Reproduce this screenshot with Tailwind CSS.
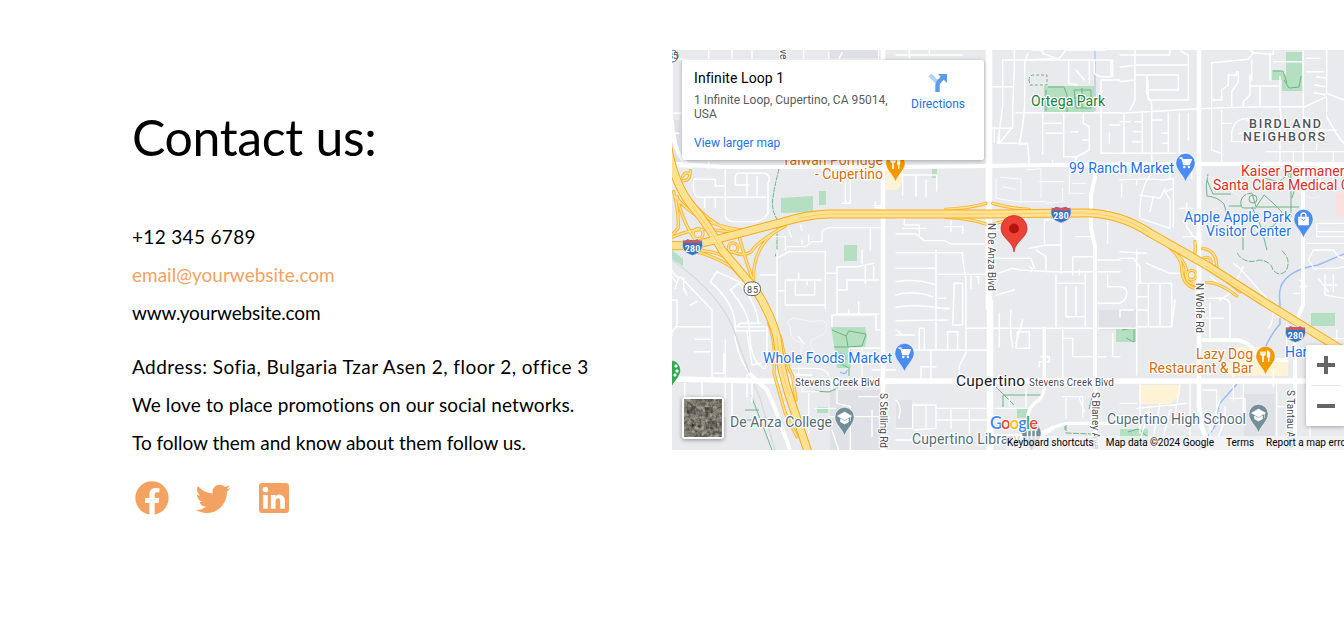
<!DOCTYPE html>
<html lang="en">
<head>
<meta charset="utf-8">
<title>Contact us</title>
<script src="https://cdn.jsdelivr.net/npm/@tailwindcss/browser@4"></script>
</head>
<body class="bg-white text-black font-['Lato',sans-serif] overflow-hidden">
<main class="flex h-[626px] w-[1344px] overflow-hidden">
  <section class="w-[672px] shrink-0 pl-[132px] pt-[102px]">
    <h1 class="text-[50px] leading-[70px] tracking-[-0.35px] whitespace-nowrap">Contact us:</h1>
    <div class="mt-[46px] text-[19px] leading-[38px] font-normal whitespace-nowrap">
      <p><span class="tracking-[0.33px]">+12 345 6789</span></p>
      <p><a class="text-[#f4a261] tracking-[0px]">email@yourwebsite.com</a></p>
      <p><span class="tracking-[-0.12px]">www.yourwebsite.com</span></p>
    </div>
    <div class="mt-4 text-[19px] leading-[38px] whitespace-nowrap">
      <p><span class="tracking-[0.46px]">Address: Sofia, Bulgaria Tzar Asen 2, floor 2, office 3</span></p>
      <p><span class="tracking-[0.12px]">We love to place promotions on our social networks.</span></p>
      <p><span class="tracking-[-0.02px]">To follow them and know about them follow us.</span></p>
    </div>
    <div class="mt-4 flex gap-[21px] text-[#f4a261]">
      <svg class="size-10" viewBox="0 0 24 24" fill="currentColor"><path d="M22 12.04C22 6.5 17.52 2 12 2S2 6.5 2 12.04c0 5.02 3.66 9.17 8.44 9.92v-7.01H7.9v-2.91h2.54V9.84c0-2.51 1.49-3.9 3.77-3.9 1.1 0 2.24.2 2.24.2v2.47h-1.26c-1.24 0-1.63.77-1.63 1.57v1.86h2.78l-.45 2.91h-2.33v7.01C18.34 21.21 22 17.06 22 12.04z"/></svg>
      <svg class="size-10" viewBox="0 0 24 24" fill="currentColor"><path d="M22.46 6c-.77.35-1.6.58-2.46.69.88-.53 1.56-1.37 1.88-2.38-.83.5-1.75.85-2.72 1.05C18.37 4.5 17.26 4 16 4c-2.35 0-4.27 1.92-4.27 4.29 0 .34.04.67.11.98C8.28 9.09 5.11 7.38 3 4.79c-.37.63-.58 1.37-.58 2.15 0 1.49.75 2.81 1.91 3.56-.71 0-1.37-.2-1.95-.5v.03c0 2.08 1.48 3.82 3.44 4.21a4.22 4.22 0 0 1-1.93.07 4.28 4.28 0 0 0 4 2.98 8.521 8.521 0 0 1-5.33 1.84c-.34 0-.68-.02-1.02-.06C3.44 20.29 5.7 21 8.12 21 16 21 20.33 14.46 20.33 8.79c0-.19 0-.37-.01-.56.84-.6 1.56-1.36 2.14-2.23z"/></svg>
      <svg class="size-10" viewBox="0 0 24 24" fill="currentColor"><path d="M19 3a2 2 0 0 1 2 2v14a2 2 0 0 1-2 2H5a2 2 0 0 1-2-2V5a2 2 0 0 1 2-2h14m-.5 15.5v-5.3a3.26 3.26 0 0 0-3.26-3.26c-.85 0-1.84.52-2.32 1.3v-1.11h-2.79v8.37h2.79v-4.93c0-.77.62-1.4 1.39-1.4a1.4 1.4 0 0 1 1.4 1.4v4.93h2.79M6.88 8.56a1.68 1.68 0 0 0 1.68-1.68c0-.93-.75-1.69-1.68-1.69a1.69 1.69 0 0 0-1.69 1.69c0 .93.76 1.68 1.69 1.68m1.39 9.94v-8.37H5.5v8.37h2.77z"/></svg>
    </div>
  </section>

  <section class="relative mt-[50px] h-[400px] w-[672px] shrink-0 overflow-hidden bg-[#e8eaed] font-['Roboto',sans-serif]">
    <svg class="block h-[400px] w-[672px]" viewBox="672 50 672 400" font-family="Roboto, sans-serif">
      <defs>
        <g id="pin"><path d="M0 18C-2 11-9.700 6-9.700-1A9.700 9.700 0 0 1 9.700-1C9.700 6 2 11 0 18z"/></g>
        <g id="cart" fill="none" stroke="#fff" stroke-width="1.3"><path d="M-6-6h2.3l2 6.5h5.5l2-4.8h-8.7" fill="#fff"/><circle cx="-1.2" cy="3" r=".6"/><circle cx="3.4" cy="3" r=".6"/></g>
        <g id="fork" fill="#fff" stroke="#fff"><path d="M-4.500-5.500v3q2 2 4 0v-3M-2.500-5.500V5" fill="none" stroke-width="1.6"/><path d="M2-6q3 1 2 6H2zM3.300-5v10" stroke-width="1.2"/></g>
        <g id="cap"><path d="M-7-2 0-6 7-2 0 2z" fill="#fff"/><path d="M-4 1v3l4 2 4-2V1L0 3z" fill="#fff"/><path d="M6-2v5" stroke="#fff"/></g>
        <g id="i280"><path d="M-9.500-7q3 1 4.500-1 5 2 10 0 1.500 2 4.500 1 3.500 12-9.500 15.500Q-13 5-9.500-7z" fill="#3574c4" stroke="#e8eaed" stroke-width=".7"/><path d="M-9-6.500q3 1 4-1 5 2 10 0 1 2 4 1l.5 2.500h-19z" fill="#d3555b"/><text y="4.500" text-anchor="middle" font-size="8.6" font-weight="700" fill="#fff" textLength="15.500">280</text></g>
        <g id="ramps">
          <g transform="translate(672 150) scale(.33333)">
            <path d="M0 60Q40 150 110 205T230 235L320 222M10 140Q60 200 130 222T250 242M5 125Q22 190 18 235L0 255M15 140Q35 230 80 282M0 262Q60 235 110 238L210 250M60 300Q140 302 170 330L215 385M20 292Q120 312 180 352L225 400M340 228Q255 275 238 305 215 322 178 305M320 238Q240 290 245 395M200 255Q212 300 240 385M55 62q0 30-20 30t-27-18M52 72q-12-10-20 8"/>
            <circle cx="78" cy="251" r="15"/><circle cx="183" cy="293" r="14"/>
          </g>
          <g transform="translate(672 240) scale(.33333)"><path d="M290 250Q312 300 306 400L340 520 375 590M325 290Q340 370 362 410L372 480M345 440Q372 470 366 540L400 600"/></g>
          <g transform="translate(1140 220) scale(.33333)">
            <path d="M70 62Q130 115 125 150 130 200 170 206M80 75Q145 130 138 155q-5 35 32 40M165 65q5 35-8 50M188 85Q230 90 230 140L245 170 300 215M200 188Q235 185 290 228"/>
            <circle cx="155" cy="165" r="14"/><circle cx="199" cy="126" r="14"/>
          </g>
          <g transform="translate(896 50) scale(.33333)"><path d="M150 478Q220 475 270 460M290 460Q340 475 400 478M150 502Q220 505 270 522M290 522L370 502"/></g>
        </g>
        <filter id="aerial" x="0" y="0" width="1" height="1" color-interpolation-filters="sRGB"><feTurbulence type="fractalNoise" baseFrequency=".28" numOctaves="4" seed="8"/><feColorMatrix values=".45 .4 0 0 .05  .45 .4 0 0 .04  .45 .4 0 0 0  0 0 0 0 1"/></filter>
      </defs>

      <!-- land use -->
      <g fill="#dfe1e6">
        <path d="M830 50h50v20h-50zM672 120h8v45h-8zM1099 310h21v20h-21zM1120 309h17v33h-17zM1244 394h31v45h-31zM830 390h50v60h-50zM896 400h16v28h-16z"/>
      </g>
      <g fill="#fef3d4"><path d="M886 168h17v14l-6 8h-11zM1139 385h41v10l-10 9h-31zM1227 362h61v14h-61zM1234 347h28l6 16h-34z"/></g>
      <path d="M1336 193h8v23h-8z" fill="#fbe0e0"/>
      <g fill="#b4dfc0">
        <path d="M781 198 813 196v16l-32 1zM819 191h7v14h-7zM844 245h13v16h-13zM932 169h5v9h-5zM1044 86h50v26h-50zM1286 52h16v39h-20V80h-10V70h7l7 5zM831 327h34l2 10-2 10-14 1v20h-14l-2-17zM1116 328h20v14h-20zM1311 313h24v13h-24zM817 407h11v6h-11zM1017 408h12v10h-12zM1120 429h28v13h-28zM672 250l11 9v7l-11-7z"/>
      </g>
      <g fill="none" stroke="#6fb584" stroke-width="1">
        <path d="M779 169q-4 15-6 28t4 22v32l-2 6" stroke-dasharray="5 1"/>
        <path d="M1029 80q0-5 5-5h13v10h-17z" stroke-dasharray="3 2"/>
        <path d="M1048 87h16l3 8v17M1046 90v21M1074 90h17v18h-15zM1082 88v20M1074 98h17M1284 80l5 8 10-1 2-11M1273 71h10l4 12M832 330l14 6 3-5 17 3-4 12-14 1-2-12M834 347h14M841 364l8 4v8M996 387l8 8 10 10M1003 395h40M1003 395v12M815 391l14 1 9-4M751 395l21 55M745 410h14M745 420h12M1122 330l12-2v14l-8-4M1128 432l10-3 10 8"/>
        <path d="M1208 174q-3 12-1 22 11 1 17 8l4 14M1207 180l6 14h18M1252 193l4 14h43M1252 193q-10 1-11 8t3 7h12M1252 207l9 20 6 23M1264 195l8 7 10 10-8 14-12 3M1264 195l-8 12M1229 206h13M1243 216v34M1264 178l15 4 12-10v45M1283 170q16 15 9 28"/>
        <circle cx="1253" cy="199" r="4"/><path d="M1237 253q8 12 22 7 12 1 14 10 6 7 13 1 6-12-5-21M1066 425v8l26 1" stroke-dasharray="6 1.5"/>
        <path d="M1092 397l-3 12M1065 430v-4"/>
      </g>
      <g fill="none" stroke="#9bbcf5" stroke-width="1.5">
        <path d="M1095 50v61" stroke-width="1"/><path d="M1344 254l-26 11q-25 4-34 16-6 7-4 22v21q-9 10-15 24M1237 384l-18 20-4 22-16 24"/>
        <path d="M840 353q6 1 6 7M840 372q6 4 7-2"/>
      </g>

      <!-- neighbourhood streets, in 224 x 200 tiles drawn at triple size -->
      <g fill="none" stroke="#fff" stroke-width="4.500" stroke-linejoin="round" stroke-linecap="round">
        <g transform="translate(672 50) scale(.33333)">
          <path d="M0 28h470M110 0v28M180 0v28M240 0v28M395 0v28h240M470 10v18h30l10-20M620 0v28M0 190h30M0 255q5 60 45 80M0 350h672" />
          <path d="M68 388h62v20h30M65 390q-5 50 15 52h200M98 445v27M130 442v30M160 360v140q5 15 30 15h60q25-2 38-25v-90q10-25-10-30H200q-10 0-10 15v20h40M225 375v68M255 380v62M110 335v20"/>
          <path d="M300 560h40v40M340 590h60l20-15h30v-30q10-12 30-12h150v70M350 540l8 20M385 525l5 16M410 555v20M595 530v70M390 570v15" stroke-width="4"/>
          <path d="M535 350v110h-25M520 390v70M610 455v18h20M607 467h22M480 375h50M0 40v210h20"/>
        </g>
        <g transform="translate(896 50) scale(.33333)">
          <path d="M320 30h325v50h-30q-20-4-20-15V30M355 0v60l-5 110v60l-40 50h60q10-40 16-110V40l10-30M320 30v140l-15 110h90q5 60 5 65M290 110h60M290 235h60M295 232v45M310 250v30M0 350h270M0 375h122v48M20 375v60M60 378v60M90 390v50M40 0v25M0 15h200M100 0v15"/>
          <path d="M410 0h30v10l40 15M400 30l90-5 20-25h120M518 30v70l25 5M580 35v65M540 60l25 30M360 188h312M440 188v125M503 190v130h40l37-20v-70l-18-10v-28M525 245h20M560 270h20M440 220h55M450 250h50M370 282h20M310 345h90M615 90h57M615 90v220h57M640 225h32M640 250v30M540 320v25"/>
          <path d="M300 385v60l75 12v-70l-60-5M320 410l40 8M390 360l45-4v85M430 395h75M360 455h90M450 460l50-5v-40M520 360v70h45M530 400h40M470 330v20M600 345v30" stroke-width="2.5"/>
          <path d="M650 80v-50M0 552h60l25 20h60l20 10h100M145 530h55v20M165 510v35M0 505h25v20h45v30M20 535h70M300 540h70M445 580v-70h55M495 520v80M400 595l50-10h45M635 480v100M540 560h50" stroke-width="4"/>
        </g>
        <g transform="translate(1120 50) scale(.33333)">
          <path d="M0 15h150V0M180 0q10 10 25 15v135H85q0-55-5-75M0 50h10l40-5h155M45 0v150l-15 30M45 75h130v45M85 120h85M80 80v50l15 30v180M0 190q300-20 480-20M0 95l45-5M0 215h30M12 190v120M45 215h20M40 245h22M38 275h22M67 190v120M95 210h30M145 190v115M178 190v120M205 190v80M0 310h200M125 250h20M128 280h15"/>
          <path d="M275 38l110-10 15-20 60 5V0M275 40v110h30v-30l20-15V75h25V65M355 65v30l-20 30v45M390 75v60l-20 20v15M395 30v60M400 10l-15-20M450 10v80M390 108h90M480 80v90l5 60M420 110v60M485 170h70l65-30M550 0v340M460 35h90M620 15v115l52 20M560 25h40M560 65h50M590 80l30 5M585 105l30 5M582 128l34 6M620 0v15M620 145v55q35 65 52 80"/>
          <path d="M335 275v-25q5-45 50-45M305 180v160M335 275h50M275 140v160l30 10M305 220h30M355 250h20M380 210h100v130M550 200l40 20v85h82M550 260h40M590 240h60M440 305h240M520 308v30M640 308v40" stroke-width="4"/>
          <path d="M0 390q90-5 130 0l30-4M90 375q-35 50-30 130l90 30v-85l-15-25 25-10M60 435l60 10 15-30M100 440l-10 45M150 345v40M50 390v15M5 400v40M160 390v140M180 475h40M200 460v70l20 30M215 340v45M190 560h35l20 15M590 520h80M590 520v40h80M590 545h80M560 580h110M590 350h82M600 365v30M640 370v20M560 400h70" stroke-width="4"/>
          <path d="M250 480q10 30 50 60M260 500q20-40 40-20l80 80M480 380q80 80 120 60M380 380v80M260 380l90 20M300 400l60 40M480 560l60-80" stroke="#f6f7f8" stroke-width="2.5"/>
        </g>
        <g transform="translate(672 250) scale(.33333)">
          <path d="M0 60q15 30 25 20l95 100v190h35v-60M35 85v30l10 20M20 85l-10 30M75 155l-20 10M0 150h15v80q-20 15-15 25M10 230h105M70 268h45M68 305h45M120 370v10M160 370v-100M160 370v130M0 80l15 20M180 390v110M225 375v65M38 400v50M90 400v45M240 395v60"/>
          <path d="M115 95l20-30 110 50M115 95q80 70 75 150v25q15 70 50 110M175 120l25-20q50 50 60 120M175 120q50 60 55 100l5 55q5 60 40 80M190 230h95v40q0 50-5 85M190 242h90M195 230l10-10h60M225 245l15 100 25-5"/>
          <path d="M315 0v230l-5 60M315 25l35-20h110v160H340V90h110M370 90v45h58V90M320 122h18M405 90v15M265 75h50M380 70v20M460 70h35V50h60l50-10M495 70v50h30V90h80V50M530 90h90M495 120v72h125M480 230v-35h132v45h20M530 195v-15M560 155v40M580 50v50M532 295h100M532 295v30M460 165v10M395 280l-15-20M570 0v40" />
          <path d="M355 230q-20-20 10-25l60 10q50-15 35 35-20 10-40 20t30 60h-60q-10-40 10-50-50 0-45-50" stroke="#f5f6f7" stroke-width="3"/>
          <path d="M330 355h100q30 0 40 20M340 375h80M380 350v40M570 295v90M550 310h70M480 385v30M600 360h70M600 400h70M390 405v20h50M495 415v45l40 10v130M410 430v120M470 500h80M430 475h60M540 500h80M600 480v80M560 440h60M480 540l20 60" stroke-width="4"/>
        </g>
        <g transform="translate(896 250) scale(.33333)">
          <path d="M0 8h200v20l10 60v220l-20 40v40M120 0v295M0 55h120M120 73h160M0 95q60-10 120 10M0 135q50-15 110 5M0 172q50-12 155 5M0 212l155-2M120 175h40M120 145h30M210 235h390M0 300h278M70 300v-65h15v60M155 295v-50h30v50M105 300v90M0 255h55M0 240l20 15M120 350h-45v40M278 75l30-5 40-15 25 5 100 5h199M405 65q10-10-5-15M310 190v100M345 180q-5 60 5 110M380 210l-20 70M365 245h35v50h-40zM300 135l55-15M295 55v-30h110l10 30M175 100h25v125h-30zM225 75v40M240 80h8v20"/>
          <path d="M480 75v155M480 100h85M510 110v90h55M540 110v90M568 70v160M500 265h30v55h100M500 235v150M600 160h72M635 75v35h37M530 20v55M530 20h65M600 30h72M630 160h42M495 0v70M550 60v15M420 0l30 20v45M600 235h72M650 250v70h22M430 350v-15h30v-15h-25"/>
          <path d="M445 235v180q-3 30-30 45-20 20-20 45v45" stroke-width="10"/>
          <path d="M435 550q60-30 80-30h157" stroke-width="10"/>
          <path d="M50 530v-65h70v70l-65 5M90 470v60M120 475h150M120 510h150M165 475v60M220 480v80M0 535h50M0 570h60M0 450q20 20 8 55M390 410v60M510 445v60M340 440v30M300 475h100M500 440h60v60M550 445l15 40" stroke-width="4"/>
        </g>
        <g transform="translate(1120 250) scale(.33333)">
          <path d="M0 25h40l20 25v50M0 5l80 5M50 100h105v130H50zM85 100v130M120 100v130M50 140h35M50 180h35M50 0v375M0 110q20 0 20 20t-20 30M0 200v-20h40M0 235h50M80 40l70 30h30M155 230l10-80M240 145h70q20 5 20 20v110M270 160v100M240 205h70M300 150l30-20-60-50"/>
          <path d="M250 270h100q45 5 70 60h80" stroke-width="12"/>
          <path d="M340 40l20 15 80 90 20 30q0 45-15 60M370 50l-30 60M470 200l40 5M540 90l20 20h-20M580 0h60l15 20 17 5M580 0l-15 30 20 30 5-5h60l22-5M615 75v60l57 10M640 75v50M620 105h30M595 85l30 40M520 130h20M500 200v100M600 265h72M650 240v30M340 340v40M370 400v100M460 360v50M570 400v160" stroke-width="4"/>
          <path d="M60 400v150M90 470l-30 100M180 405l-20 120M120 460l-20 100M210 395v165M50 475l150-15M150 480l-20 80M0 460h50M0 500q40 5 60 5M330 445h45v80M315 470v40l-20 50M340 400v50M250 420h40v100M470 400v160M300 450q-20 60-25 90M475 470h30M270 560v-40h60" stroke-width="4"/>
        </g>
        <path d="M672 260q48 34 62 70 12 37 26 68l15 52" stroke="#d5d8dc" stroke-width="1.2"/>
      </g>

      <!-- main roads -->
      <g fill="none" stroke="#fff" stroke-linejoin="round">
        <path d="M989 50v260M990 300v150" stroke-width="6.5"/>
        <path d="M883 50v400M1199 50v355l2 20 8 20v5" stroke-width="4.6"/>
        <path d="M1095 165v12l-4 18v33l4 18v204M1303 165v140l-8 20v125" stroke-width="4"/>
        <path d="M672 164h10l40 3h174l90-1 60-1 120-1h180M672 120q2 40 20 47" stroke-width="4"/>
        <path d="M672 379l90 2h582" stroke-width="5.6"/>
        <path d="M749 373l18 17 8 18q7 20 15 42" stroke-width="4"/>
        <path d="M990 436h50l14-9" stroke-width="4"/>
      </g>

      <!-- freeways -->
      <g fill="none" stroke-linecap="round" stroke-linejoin="round">
        <use href="#ramps" stroke="#f9b62f" stroke-width="10"/>
        <use href="#ramps" stroke="#fde293" stroke-width="4.500"/>
        <path d="M668 245q20 3 50-6l65-17q22-7 45-8h160l92-1q38-1 70 20l58 33 56 36 88 54M668 148q7 38 24 58t30 44l33 39q16 25 22 48 4 35 12 58l20 60" stroke="#f9ab18" stroke-width="8.800"/>
        <path d="M668 245q20 3 50-6l65-17q22-7 45-8h160l92-1q38-1 70 20l58 33 56 36 88 54M668 148q7 38 24 58t30 44l33 39q16 25 22 48 4 35 12 58l20 60" stroke="#fde293" stroke-width="6.800"/>
        <path d="M800 218q14-3 28-4h160l92-1q38-1 70 20M692 206q16 20 30 44M1206 266l56 36M777 337q4 35 12 58" stroke="#fbc95c" stroke-width=".8"/>
      </g>
      <path d="M1199 222v23M1199 270v30" stroke="#fff" stroke-width="4.600"/>

      <!-- street names -->
      <g fill="#494c50" stroke="#fff" stroke-width="2.4" paint-order="stroke" stroke-linejoin="round" font-size="10">
        <text x="795" y="386" textLength="85">Stevens Creek Blvd</text>
        <text x="1029" y="386" textLength="85">Stevens Creek Blvd</text>
        <text transform="translate(987.5 223) rotate(90)" textLength="68">N De Anza Blvd</text>
        <text transform="translate(1196 283) rotate(90)" textLength="50">N Wolfe Rd</text>
        <text transform="translate(879.5 393) rotate(90)" textLength="55">S Stelling Rd</text>
        <text transform="translate(1092 392) rotate(90)" textLength="57">S Blaney Ave</text>
        <text transform="translate(1287 390) rotate(90)" textLength="58">S Tantau Ave</text>
        <text transform="translate(780 43) rotate(90)">Ave</text>
      </g>

      <!-- place names -->
      <g stroke="#fff" stroke-width="2.4" paint-order="stroke" stroke-linejoin="round" font-size="14">
        <g fill="#d56e0c">
          <text x="782" y="165" textLength="101">Taiwan Porridge</text><text x="815" y="179" textLength="68">- Cupertino</text>
          <text x="1196" y="359" textLength="57">Lazy Dog</text><text x="1149" y="373" textLength="104">Restaurant &amp; Bar</text>
        </g>
        <g fill="#1a73e8">
          <text x="1069" y="173" textLength="105">99 Ranch Market</text>
          <text x="1184" y="222" textLength="107">Apple Apple Park</text><text x="1206" y="236" textLength="85">Visitor Center</text>
          <text x="763" y="363" textLength="129">Whole Foods Market</text><text x="1285" y="357">Harvest</text>
        </g>
        <g fill="#d93025"><text x="1241" y="176">Kaiser Permanente</text><text x="1213" y="190">Santa Clara Medical Center</text></g>
        <text x="1031" y="106" textLength="74" fill="#188038">Ortega Park</text>
        <g fill="#546e7a">
          <text x="730" y="427" textLength="102">De Anza College</text><text x="912" y="444" textLength="108">Cupertino Library</text><text x="1107" y="424" textLength="139">Cupertino High School</text>
        </g>
        <g fill="#4f5358" font-size="12.500" font-weight="500"><text x="1249" y="127.500" textLength="72">BIRDLAND</text><text x="1243" y="140.500" textLength="82">NEIGHBORS</text></g>
        <text x="956" y="385.500" font-size="15.500" fill="#202124" textLength="69">Cupertino</text>
      </g>

      <!-- markers -->
      <g stroke="#fff" stroke-width=".6">
        <g transform="translate(895.500 164)" fill="#f29900"><use href="#pin"/><use href="#fork"/></g>
        <g transform="translate(1265.500 357)" fill="#f29900"><use href="#pin"/><use href="#fork"/></g>
        <g transform="translate(1185.500 164)" fill="#4b8bf4"><use href="#pin"/><use href="#cart"/></g>
        <g transform="translate(904.500 354)" fill="#4b8bf4"><use href="#pin"/><use href="#cart"/></g>
        <g transform="translate(1303.500 220)" fill="#4b8bf4"><use href="#pin"/><path d="M-5-3H5v8H-5z" fill="#fff"/><path d="M-2.500-3v-1q0-3 2.500-3t2.500 3v1" fill="none" stroke-width="1.300"/><path d="M-2-1q2 3 4 0" stroke="#4b8bf4" fill="none" stroke-width="1"/></g>
        <g transform="translate(844.500 418)" fill="#738e99"><use href="#pin"/><use href="#cap"/></g>
        <g transform="translate(1258.500 415)" fill="#738e99"><use href="#pin"/><use href="#cap"/></g>
        <g transform="translate(1031.500 434)" fill="#738e99"><use href="#pin"/><path d="M-6-4H6M-4-3v8M0-3v8M4-3v8" stroke-width="1.500"/></g>
        <g transform="translate(671 371)" fill="#34a853"><use href="#pin"/><circle cx="5" cy="-5" r="1.300" fill="#fff"/><circle cx="6" cy="0" r="1.300" fill="#fff"/><circle cx="4" cy="4" r="1.300" fill="#fff"/></g>
      </g>
      <use href="#i280" x="692.500" y="247"/><use href="#i280" x="1061" y="214.500"/><use href="#i280" x="1295.500" y="334"/>
      <g stroke="#5f6368" fill="#fff"><rect x="744" y="282" width="16.500" height="13.500" rx="6.500"/><circle cx="672" cy="56" r="6"/></g>
      <text x="747" y="292.500" font-size="9" fill="#3c4043" textLength="11">85</text><text x="668" y="59" font-size="9" fill="#3c4043">85</text>
      <path d="M1014 252c-1-11-13-14-13-23.500a13 13 0 0 1 26 0c0 9.500-12 12.500-13 23.500z" fill="#ea4335" stroke="#c5221f" stroke-width=".7"/><circle cx="1014" cy="228.500" r="5" fill="#b31412"/>

      <text x="990" y="429" font-family="Lato, sans-serif" font-size="16.500" font-weight="600" stroke="#fff" stroke-width="2" paint-order="stroke" textLength="48"><tspan fill="#4285f4">G</tspan><tspan fill="#ea4335">o</tspan><tspan fill="#fbbc04">o</tspan><tspan fill="#4285f4">g</tspan><tspan fill="#34a853">l</tspan><tspan fill="#ea4335">e</tspan></text>
    </svg>

    <div class="absolute left-[10px] top-[10px] flex h-[100px] w-[302px] justify-between rounded-[2px] bg-white pl-3 pr-[19px] text-[12px] shadow-[0_1px_4px_rgba(0,0,0,0.3)]">
      <div class="w-[200px] pt-[10px]">
        <div class="text-[14px] leading-4 text-black tracking-[0.07px]">Infinite Loop 1</div>
        <div class="mt-[7px] leading-[14px] text-[#5b5b5b]">1 Infinite Loop, Cupertino, CA 95014, USA</div>
        <div class="mt-[15px] leading-[14px] text-[#1a73e8]">View larger map</div>
      </div>
      <div class="flex flex-col items-center pt-[13px] text-[#1a73e8]">
        <svg class="h-[20px] w-[20px]" viewBox="0 0 20 20"><path d="m2 2 8 8" stroke="#b3d1f7" stroke-width="4"/><path d="M9.500 19v-7q0-2 2-4l5-5" fill="none" stroke="#5b9be8" stroke-width="4.400"/><path d="M10 1h9v9z" fill="#5b9be8"/></svg>
        <div class="mt-[4px] leading-[14px]">Directions</div>
      </div>
    </div>

    <div class="absolute left-[10px] top-[347px] size-[42px] rounded-[3px] border-2 border-white shadow-[0_1px_4px_rgba(0,0,0,0.4)]">
      <svg class="block size-full" viewBox="0 0 38 38"><rect width="38" height="38" filter="url(#aerial)"/><path d="M3 8h8v7H3zM21 8h8v6h-8zM24 22h9v8h-9z" fill="#2f2f2a" opacity=".4"/><path d="M0 19h38M19 0v38M31 0v38" stroke="#b9b5ac" stroke-width=".7" opacity=".4"/></svg>
    </div>

    <div class="absolute right-0 top-[386px] flex h-[14px] w-[338px] gap-3 bg-[#f5f5f5]/75 pl-px text-[10px] leading-[14px] text-black whitespace-nowrap">
      <span class="w-[87px] tracking-[0px]">Keyboard shortcuts</span><span class="w-[109px] tracking-[-0.03px]">Map data ©2024 Google</span><span class="w-7">Terms</span><span class="tracking-[0px]">Report a map error</span>
    </div>

    <div class="absolute left-[634px] top-[295px] flex h-[81px] w-[40px] flex-col items-center rounded-[2px] bg-white shadow-[0_1px_4px_rgba(0,0,0,0.3)]">
      <svg class="h-[40px] w-[40px]" viewBox="0 0 40 40"><path d="M11 20h18M20 11v18" stroke="#666" stroke-width="4"/></svg>
      <div class="h-px w-[30px] bg-[#e6e6e6]"></div>
      <svg class="h-[40px] w-[40px]" viewBox="0 0 40 40"><path d="M11 20h18" stroke="#666" stroke-width="4"/></svg>
    </div>
  </section>
</main>
</body>
</html>
